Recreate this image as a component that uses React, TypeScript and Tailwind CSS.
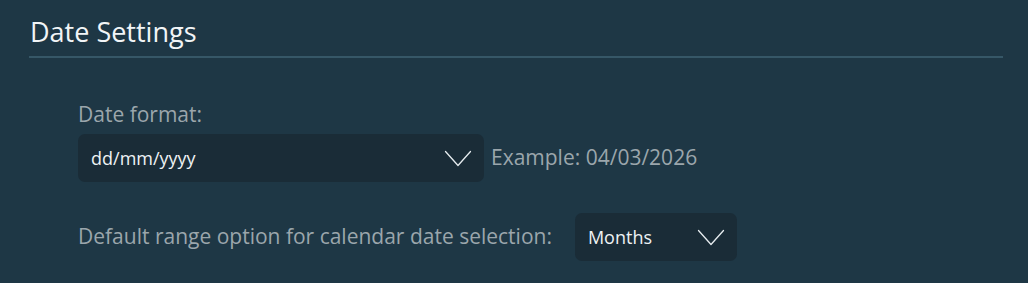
import { useState } from "react";

function Chevron() {
  return (
    <svg width="28" height="17" viewBox="0 0 28 17" fill="none">
      <path
        d="M1.5 1.5 L14 15.5 L26.5 1.5"
        stroke="#e6ecef"
        strokeWidth="1.3"
        strokeLinecap="round"
        strokeLinejoin="round"
      />
    </svg>
  );
}

export default function App() {
  const [format] = useState("dd/mm/yyyy");
  const [range] = useState("Months");

  return (
    <div
      className="h-[283px] w-full bg-[#1e3745] pl-[29px] pr-[25px] pt-[15px]"
      style={{ fontFamily: '"Open Sans", "Noto Sans", sans-serif' }}
    >
      <h2 className="pl-[1px] text-[27px] leading-[34px] text-[#f2f5f7]">
        Date Settings
      </h2>
      <div className="mt-[7px] h-[2px] w-full bg-[#365767]" />

      <div className="pl-[49px] pt-[42px]">
        <div className="text-[21px] leading-[28px] text-[#9ba6ac]">
          Date format:
        </div>
        <div className="mt-[6px] flex items-center gap-[7px]">
          <button className="flex h-[48px] w-[406px] items-center justify-between rounded-[7px] bg-[#1a2c37] pl-[13px] pr-[12px] text-[18px] text-[#eef2f4]">
            <span>{format}</span>
            <Chevron />
          </button>
          <span className="text-[21px] text-[#9ba6ac]">Example: 04/03/2026</span>
        </div>

        <div className="mt-[31px] flex items-center gap-[23px]">
          <span className="text-[21px] text-[#9ba6ac]">
            Default range option for calendar date selection:
          </span>
          <button className="flex h-[48px] w-[162px] items-center justify-between rounded-[7px] bg-[#1a2c37] pl-[13px] pr-[12px] text-[18px] text-[#eef2f4]">
            <span>{range}</span>
            <Chevron />
          </button>
        </div>
      </div>
    </div>
  );
}
